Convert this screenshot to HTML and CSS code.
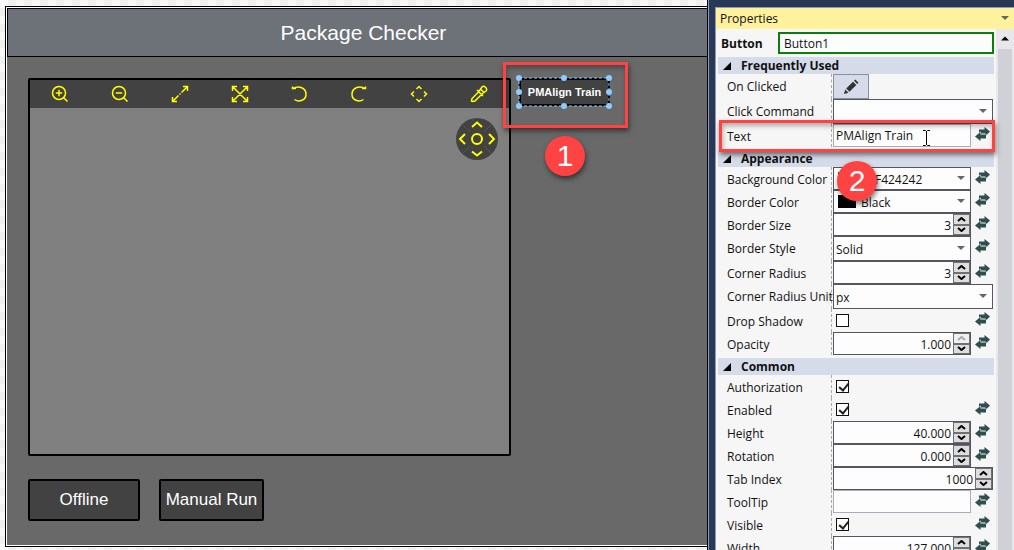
FILE: index.html
```
<!DOCTYPE html>
<html lang="en">
  <head>
    <meta charset="UTF-8" />
    <meta name="viewport" content="width=device-width, initial-scale=1.0" />
    <title>Package Checker</title>
    <link rel="stylesheet" href="styles.css">
  </head>
  <body>
    <!-- Shared icons -->
    <svg class="sprite" aria-hidden="true">
      <symbol id="swap" viewBox="0 0 15 14">
        <path d="M4 2.500h5.500V0L15 4.500 10.500 9V6.500H4z" />
        <path class="swap-front" d="M11 7.500H5.500V5L0 9.500 5.500 14v-2.500H11z" />
      </symbol>
      <symbol id="drop" viewBox="0 0 8 5"><path d="M0 0h8L4 4z" /></symbol>
      <symbol id="up" viewBox="0 0 9 5"><path d="M1 4l3.500-3L8 4" /></symbol>
      <symbol id="down" viewBox="0 0 9 5"><path d="M1 1l3.500 3L8 1" /></symbol>
      <symbol id="open" viewBox="0 0 8 8"><path d="M8 0v8H0z" /></symbol>
    </svg>

    <main class="canvas">
      <div class="frame">
        <h1 class="title">Package Checker</h1>
        <div class="stage">
          <div class="stage-top">
            <section class="viewer">
              <div class="toolbar">
                <button class="tool" aria-label="Zoom in"><svg viewBox="0 0 18 18"><circle cx="8" cy="8" r="6.500" /><path d="M12.700 12.700L16.500 16.500M8 4.800v6.400M4.800 8h6.400" /></svg></button>
                <button class="tool" aria-label="Zoom out"><svg viewBox="0 0 18 18"><circle cx="8" cy="8" r="6.500" /><path d="M12.700 12.700L16.500 16.500M4.800 8h6.400" /></svg></button>
                <button class="tool" aria-label="Actual size"><svg viewBox="0 0 18 18"><path d="M2 16l5.500-5.500M8.500 9.500l1-1M10.500 7.500L16 2M12 1.500h4.500V6M1.500 12v4.500H6" /></svg></button>
                <button class="tool" aria-label="Fit"><svg viewBox="0 0 18 18"><path d="M2 2l14 14M16 2L2 16M12 1.500h4.500V6M1.500 12v4.500H6M1.500 6V1.500H6M16.500 12v4.500H12" /></svg></button>
                <button class="tool" aria-label="Rotate left"><svg viewBox="0 0 18 18"><path d="M3 3.500C9 0 16 3 16 9.200S9 17.500 4.500 14.500M6 3.500H2.500V1.500" /></svg></button>
                <button class="tool" aria-label="Rotate right"><svg viewBox="0 0 18 18"><path d="M15 3.500C9 0 2 3 2 9.200s7 8.300 11.500 5.300M12 3.500h3.500V1.500" /></svg></button>
                <button class="tool" aria-label="Pan"><svg viewBox="0 0 18 18"><path d="M6.500 4L9 1.500 11.500 4M6.500 14L9 16.500 11.500 14M4 6.500L1.500 9 4 11.500M14 6.500L16.500 9 14 11.500" /></svg></button>
                <button class="tool" aria-label="Pick color"><svg viewBox="0 0 18 18"><path d="M8.500 7L2 13.500l-.5 2.500 1 .5 2.500-.5L11.500 9.500M7 5l6 6M9 6l3-4c2-2 6 1.500 4 4l-4 3M10 3.500L14.500 8" /></svg></button>
              </div>
              <div class="view">
                <svg class="pan-pad" viewBox="0 0 42 42">
                  <circle class="pad" cx="21" cy="21" r="21" />
                  <path class="spokes" d="M7 7l7 7M35 7l-7 7M7 35l7-7M35 35l-7-7" />
                  <circle cx="21" cy="21" r="5" />
                  <path d="M16 9l5-4.500L26 9M16 33.500l5 4 5-4M9 16l-5 5 5 5M33 16l5 5-5 5" />
                </svg>
              </div>
            </section>
            <div class="side">
              <button class="train">
                PMAlign Train
                <svg class="selection" viewBox="0 0 96 35">
                  <rect x="3" y="4" width="90" height="28" />
                  <g>
                    <circle cx="3" cy="4" r="3" /><circle cx="48" cy="4" r="3" /><circle cx="93" cy="4" r="3" />
                    <circle cx="3" cy="18" r="3" /><circle cx="93" cy="18" r="3" />
                    <circle cx="3" cy="32" r="3" /><circle cx="48" cy="32" r="3" /><circle cx="93" cy="32" r="3" />
                  </g>
                </svg>
                <span class="callout callout-train"></span>
                <span class="badge badge-train">1</span>
              </button>
            </div>
          </div>
          <div class="actions">
            <button class="action offline">Offline</button>
            <button class="action">Manual Run</button>
          </div>
        </div>
      </div>
    </main>

    <aside class="dock">
      <div class="panel">
        <header class="panel-head">
          <span>Properties</span>
          <svg class="drop"><use href="#drop" /></svg>
        </header>
        <div class="panel-body">
          <form class="props">
            <div class="name-row">
              <label for="name">Button</label>
              <input type="text" id="name" value="Button1" />
            </div>

            <h2 class="group"><svg><use href="#open" /></svg>Frequently Used</h2>
            <div class="row tall">
              <label for="clicked">On Clicked</label>
              <button type="button" class="edit" id="clicked" aria-label="Edit script">
                <svg viewBox="0 0 16 16"><path d="M1 15l1.200-4.500 3.300 3.300zM3.200 9.500L10 2.700l3.300 3.300-6.800 6.800zM11 1.800L12.300.5l3.200 3.200L14.200 5z" /></svg>
              </button>
            </div>
            <div class="row tall">
              <label for="command">Click Command</label>
              <div class="field wide"><select id="command"><option></option></select><svg class="drop"><use href="#drop" /></svg></div>
            </div>
            <div class="row">
              <label for="text">Text</label>
              <div class="field plain"><input type="text" id="text" value="PMAlign Train" /></div>
              <svg class="swap"><use href="#swap" /></svg>
              <span class="callout callout-text"></span>
              <svg class="ibeam" viewBox="0 0 7 16"><path d="M0 .5h2.500l1 1 1-1H7M0 15.500h2.500l1-1 1 1H7M3.500 1v14" /></svg>
            </div>

            <h2 class="group spaced"><svg><use href="#open" /></svg>Appearance</h2>
            <div class="row">
              <label for="background">Background Color</label>
              <div class="field"><span class="swatch gray"></span><select id="background"><option>#FF424242</option></select><svg class="drop"><use href="#drop" /></svg></div>
              <svg class="swap"><use href="#swap" /></svg>
              <span class="badge badge-text">2</span>
            </div>
            <div class="row">
              <label for="border-color">Border Color</label>
              <div class="field"><span class="swatch"></span><select id="border-color"><option>Black</option></select><svg class="drop"><use href="#drop" /></svg></div>
              <svg class="swap"><use href="#swap" /></svg>
            </div>
            <div class="row">
              <label for="border-size">Border Size</label>
              <div class="field number"><input type="text" id="border-size" value="3" /><div class="spin"><button type="button" aria-label="More"><svg><use href="#up" /></svg></button><button type="button" aria-label="Less"><svg><use href="#down" /></svg></button></div></div>
              <svg class="swap"><use href="#swap" /></svg>
            </div>
            <div class="row tall">
              <label for="border-style">Border Style</label>
              <div class="field"><select id="border-style"><option>Solid</option></select><svg class="drop"><use href="#drop" /></svg></div>
              <svg class="swap"><use href="#swap" /></svg>
            </div>
            <div class="row">
              <label for="radius">Corner Radius</label>
              <div class="field number"><input type="text" id="radius" value="3" /><div class="spin"><button type="button" aria-label="More"><svg><use href="#up" /></svg></button><button type="button" aria-label="Less"><svg><use href="#down" /></svg></button></div></div>
              <svg class="swap"><use href="#swap" /></svg>
            </div>
            <div class="row tall">
              <label for="unit">Corner Radius Unit</label>
              <div class="field wide"><select id="unit"><option>px</option></select><svg class="drop"><use href="#drop" /></svg></div>
            </div>
            <div class="row">
              <label for="shadow">Drop Shadow</label>
              <div class="check"><input type="checkbox" id="shadow" /></div>
              <svg class="swap"><use href="#swap" /></svg>
            </div>
            <div class="row">
              <label for="opacity">Opacity</label>
              <div class="field number"><input type="text" id="opacity" value="1.000" /><div class="spin"><button type="button" aria-label="More" disabled><svg><use href="#up" /></svg></button><button type="button" aria-label="Less"><svg><use href="#down" /></svg></button></div></div>
              <svg class="swap"><use href="#swap" /></svg>
            </div>

            <h2 class="group spaced"><svg><use href="#open" /></svg>Common</h2>
            <div class="row">
              <label for="authorization">Authorization</label>
              <div class="check"><input type="checkbox" id="authorization" checked /></div>
            </div>
            <div class="row">
              <label for="enabled">Enabled</label>
              <div class="check"><input type="checkbox" id="enabled" checked /></div>
              <svg class="swap"><use href="#swap" /></svg>
            </div>
            <div class="row">
              <label for="height">Height</label>
              <div class="field number"><input type="text" id="height" value="40.000" /><div class="spin"><button type="button" aria-label="More"><svg><use href="#up" /></svg></button><button type="button" aria-label="Less"><svg><use href="#down" /></svg></button></div></div>
              <svg class="swap"><use href="#swap" /></svg>
            </div>
            <div class="row">
              <label for="rotation">Rotation</label>
              <div class="field number"><input type="text" id="rotation" value="0.000" /><div class="spin"><button type="button" aria-label="More"><svg><use href="#up" /></svg></button><button type="button" aria-label="Less"><svg><use href="#down" /></svg></button></div></div>
              <svg class="swap"><use href="#swap" /></svg>
            </div>
            <div class="row">
              <label for="tab-index">Tab Index</label>
              <div class="field number wide"><input type="text" id="tab-index" value="1000" /><div class="spin"><button type="button" aria-label="More"><svg><use href="#up" /></svg></button><button type="button" aria-label="Less"><svg><use href="#down" /></svg></button></div></div>
            </div>
            <div class="row">
              <label for="tooltip">ToolTip</label>
              <div class="field plain"><input type="text" id="tooltip" /></div>
              <svg class="swap"><use href="#swap" /></svg>
            </div>
            <div class="row">
              <label for="visible">Visible</label>
              <div class="check"><input type="checkbox" id="visible" checked /></div>
              <svg class="swap"><use href="#swap" /></svg>
            </div>
            <div class="row">
              <label for="width">Width</label>
              <div class="field number"><input type="text" id="width" value="127.000" /><div class="spin"><button type="button" aria-label="More"><svg><use href="#up" /></svg></button><button type="button" aria-label="Less"><svg><use href="#down" /></svg></button></div></div>
              <svg class="swap"><use href="#swap" /></svg>
            </div>
          </form>
          <div class="scrollbar">
            <svg viewBox="0 0 8 5"><path d="M0 4.500h8l-4-4z" /></svg>
            <div class="thumb"></div>
          </div>
        </div>
      </div>
    </aside>
  </body>
</html>
```
FILE: styles.css
```
* {
  box-sizing: border-box;
}
body {
  display: flex;
  height: 100vh;
  margin: 0;
  overflow: hidden;
  font-family: "Open Sans", "Noto Sans", sans-serif;
  font-size: 12px;
  color: #111;
}
button,
input,
select {
  margin: 0;
  padding: 0;
  border: 0;
  font: inherit;
  color: inherit;
}
.sprite {
  position: absolute;
  width: 0;
  height: 0;
}

/* Design canvas */
.canvas {
  display: flex;
  flex: 1;
  min-width: 0;
  overflow: hidden;
  font-family: "Liberation Sans", Arial, sans-serif;
  background: repeating-conic-gradient(#efefef 0 25%, #f7f7f7 0 50%) 0 0 / 16px 16px;
  border-right: 1px solid #000;
}
.frame {
  display: flex;
  flex-direction: column;
  flex: 1;
  margin: 6px -15px 3px 5px;
  padding: 1px;
  border: 1px solid #000;
  background: #fff;
}
.title {
  margin: 0;
  border: 1px solid #000;
  background: #6d7178;
  color: #fff;
  font-size: 21px;
  font-weight: normal;
  line-height: 47px;
  text-align: center;
}
.stage {
  display: flex;
  flex-direction: column;
  flex: 1;
  gap: 23px;
  padding: 21px 0 24px 21px;
  background: #696969;
}
.stage-top {
  display: flex;
  flex: 1;
  gap: 8px;
}
.viewer {
  display: flex;
  flex-direction: column;
  flex: 1;
  border: 2px solid #000;
  border-radius: 2px;
}
.toolbar {
  display: flex;
  height: 28px;
  background: #424242;
}
.tool {
  display: flex;
  flex: 1;
  align-items: center;
  justify-content: center;
  background: none;
}
.tool svg {
  width: 18px;
  height: 18px;
  fill: none;
  stroke: #ff0;
  stroke-width: 1.5;
}
.view {
  display: flex;
  flex: 1;
  justify-content: flex-end;
  padding: 10px 11px;
  background: #808080;
}
.pan-pad {
  width: 42px;
  height: 42px;
  fill: none;
  stroke: #ff0;
  stroke-width: 2;
}
.pad {
  fill: #424242;
  stroke: none;
}
.spokes {
  stroke: #555;
  stroke-width: 1;
}
.side {
  width: 201px;
}
.train {
  position: relative;
  width: 91px;
  height: 28px;
  border: 2px solid #000;
  background: #424242;
  color: #fff;
  font-size: 11px;
  font-weight: bold;
  white-space: nowrap;
}
.selection {
  position: absolute;
  top: -6px;
  left: -5px;
  width: 96px;
  height: 35px;
  fill: none;
}
.selection rect {
  stroke: #8cccff;
  stroke-dasharray: 3 2;
}
.selection circle {
  fill: #8cccff;
}
.actions {
  display: flex;
  gap: 19px;
}
.action {
  width: 105px;
  height: 42px;
  border: 2px solid #000;
  border-radius: 2px;
  background: #424242;
  color: #fff;
  font-size: 17px;
  white-space: nowrap;
}
.offline {
  width: 112px;
}

/* Numbered callouts */
.callout {
  position: absolute;
  z-index: 1;
  border: 3px solid #ff4242;
  box-shadow: 1px 3px 5px rgba(0, 0, 0, 0.5), inset 1px 3px 5px rgba(0, 0, 0, 0.3);
  pointer-events: none;
}
.callout-train {
  top: -18px;
  left: -18px;
  width: 125px;
  height: 66px;
}
.callout-text {
  top: -4px;
  left: 1px;
  right: -1px;
  height: 32px;
}
.badge {
  position: absolute;
  z-index: 2;
  width: 40px;
  height: 40px;
  border-radius: 50%;
  background: #ff4242;
  box-shadow: 1px 3px 5px rgba(0, 0, 0, 0.5);
  color: #fff;
  font-family: "Liberation Sans", Arial, sans-serif;
  font-size: 30px;
  font-weight: normal;
  line-height: 40px;
  text-align: center;
}
.badge-train {
  top: 56px;
  left: 24px;
}
.badge-text {
  top: -6px;
  left: 119px;
}

/* Properties panel */
.dock {
  display: flex;
  width: 306px;
  padding: 7px 0 0 6px;
  border-left: 1px solid #8e9bbc;
  background: #293955;
}
.panel {
  display: flex;
  flex-direction: column;
  flex: 1;
  min-width: 0;
  border: 1px solid #8e9bbc;
  border-width: 1px 0 0 1px;
  background: #f6f6f6;
}
.panel-head {
  display: flex;
  align-items: center;
  justify-content: space-between;
  height: 21px;
  padding: 0 5px 0 4px;
  background: #fff29d;
}
.drop {
  width: 8px;
  height: 5px;
  fill: #666;
}
.panel-body {
  display: flex;
  flex: 1;
  min-height: 0;
}
.props {
  flex: 1;
  min-width: 0;
  padding: 0 2px;
}
.name-row {
  display: flex;
  align-items: center;
  height: 28px;
  padding-left: 3px;
}
.name-row label {
  width: 57px;
  font-weight: bold;
}
.name-row input {
  flex: 1;
  min-width: 0;
  height: 22px;
  padding: 0 4px;
  border: 2px solid #0a800a;
  background: #fdfdfd;
}
.group {
  display: flex;
  align-items: center;
  gap: 10px;
  height: 17px;
  margin: 0;
  padding-left: 5px;
  background: #d6dbe9;
  font-size: 12px;
}
.group svg {
  width: 8px;
  height: 8px;
}
.spaced {
  margin-top: 3px;
}
.row {
  position: relative;
  display: flex;
  height: 23px;
}
.row.tall {
  height: 25px;
}
.row label {
  width: 114px;
  margin-right: 1px;
  padding: 1px 0 0 9px;
  border-right: 1px dashed #aaa;
  line-height: 24px;
  white-space: nowrap;
}
.field {
  display: flex;
  align-items: center;
  flex: 1;
  min-width: 0;
  margin-right: 4px;
  border: 1px solid #55555f;
  background: #fdfdfd;
}
.field.wide {
  margin-right: 1px;
}
.field.plain {
  border-color: #abadb3;
}
.field input,
.field select {
  flex: 1;
  min-width: 0;
  height: 100%;
  padding: 1px 2px 0;
  background: none;
  appearance: none;
}
.field.plain input {
  padding-top: 0;
}
.field .drop {
  margin-right: 5px;
}
.number input {
  text-align: right;
}
.swatch {
  width: 18px;
  height: 13px;
  margin: 0 3px 0 4px;
  background: #000;
}
.gray {
  background: #424242;
}
.spin {
  display: flex;
  flex-direction: column;
  align-self: stretch;
  width: 17px;
}
.spin button {
  display: flex;
  flex: 1;
  align-items: center;
  justify-content: center;
  min-height: 0;
  border: 1px solid #707070;
  background: #ddd;
}
.spin svg {
  width: 9px;
  height: 5px;
  fill: none;
  stroke: #000;
  stroke-width: 2;
}
.spin button:disabled {
  background: #f0f0f0;
}
.spin button:disabled svg {
  stroke: #aaa;
}
.swap {
  width: 15px;
  height: 14px;
  margin: 3px 4px 0 0;
  fill: #2f4f4f;
}
.swap-front {
  stroke: #f6f6f6;
  stroke-width: 1;
  paint-order: stroke;
}
.edit {
  display: flex;
  align-items: center;
  justify-content: center;
  width: 36px;
  border: 1px solid #8a8f9c;
  background: #d6dbe9;
}
.edit svg {
  width: 16px;
  height: 16px;
  fill: #333;
}
.check {
  flex: 1;
  padding: 5px 3px;
}
.check input {
  display: block;
  width: 13px;
  height: 13px;
  border: 1px solid #111;
  background: #fff;
  appearance: none;
}
.check input:checked::before {
  content: "";
  display: block;
  width: 4px;
  height: 8px;
  margin: 0 0 0 4px;
  border: solid #222;
  border-width: 0 2px 2px 0;
  transform: rotate(40deg);
}
.ibeam {
  position: absolute;
  top: 6px;
  right: 64px;
  width: 7px;
  height: 16px;
  fill: none;
  stroke: #000;
}
.scrollbar {
  display: flex;
  flex-direction: column;
  align-items: center;
  gap: 8px;
  width: 18px;
  padding-top: 7px;
  background: #e8e8ec;
}
.scrollbar svg {
  width: 8px;
  height: 5px;
}
.thumb {
  flex: 1;
  width: 14px;
  background: #d0d1d7;
}
```
